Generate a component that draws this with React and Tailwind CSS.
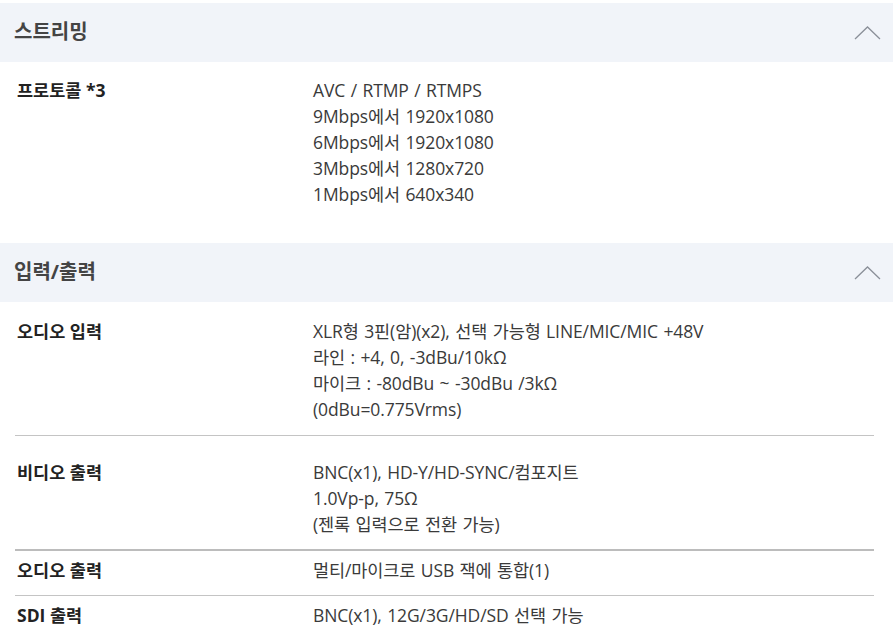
const font = { fontFamily: '"Open Sans", "Noto Sans CJK KR", sans-serif' };

function Chevron() {
  return (
    <svg width="27" height="14" viewBox="0 0 27 14" fill="none" className="shrink-0">
      <path d="M1 13 L13.5 1 L26 13" stroke="#8b9099" strokeWidth="1.3" />
    </svg>
  );
}

function SectionHeader({ title }) {
  return (
    <div className="flex h-[59px] items-center justify-between bg-[#f1f4f9] pl-[14px] pr-[12px]">
      <h2 className="text-[20px] font-bold text-[#444] leading-none pb-[2px]">{title}</h2>
      <Chevron />
    </div>
  );
}

function Row({ label, lines, className = '' }) {
  return (
    <div className={`flex ${className}`}>
      <div className="w-[313px] shrink-0 pl-[17px] text-[17.5px] font-bold leading-[26px] text-[#222]">
        {label}
      </div>
      <div className="text-[17.5px] leading-[26px] tracking-[-0.1px] [word-spacing:1px] text-[#3a3a3a]">
        {lines.map((l) => (
          <div key={l}>{l}</div>
        ))}
      </div>
    </div>
  );
}

export default function App() {
  return (
    <div className="w-[893px] min-h-[639px] bg-white pt-[3px]" style={font}>
      <SectionHeader title="스트리밍" />
      <Row
        className="pt-[15px] pb-[36px]"
        label="프로토콜 *3"
        lines={[
          'AVC / RTMP / RTMPS',
          '9Mbps에서 1920x1080',
          '6Mbps에서 1920x1080',
          '3Mbps에서 1280x720',
          '1Mbps에서 640x340',
        ]}
      />
      <SectionHeader title="입력/출력" />
      <div className="pr-[19px]">
        <Row
          className="pt-[16px] pb-[13px]"
          label="오디오 입력"
          lines={[
            'XLR형 3핀(암)(x2), 선택 가능형 LINE/MIC/MIC +48V',
            '라인 : +4, 0, -3dBu/10kΩ',
            '마이크 : -80dBu ~ -30dBu /3kΩ',
            '(0dBu=0.775Vrms)',
          ]}
        />
        <div className="ml-[15px] h-px bg-[#c4c4c4]" />
        <Row
          className="pt-[23px] pb-[12px]"
          label="비디오 출력"
          lines={['BNC(x1), HD-Y/HD-SYNC/컴포지트', '1.0Vp-p, 75Ω', '(젠록 입력으로 전환 가능)']}
        />
        <div className="ml-[15px] h-[2px] bg-[#bcbcbc]" />
        <Row className="pt-[6px] pb-[12px]" label="오디오 출력" lines={['멀티/마이크로 USB 잭에 통합(1)']} />
        <div className="ml-[15px] h-px bg-[#c4c4c4]" />
        <Row className="pt-[6px] pb-[12px]" label="SDI 출력" lines={['BNC(x1), 12G/3G/HD/SD 선택 가능']} />
      </div>
    </div>
  );
}
